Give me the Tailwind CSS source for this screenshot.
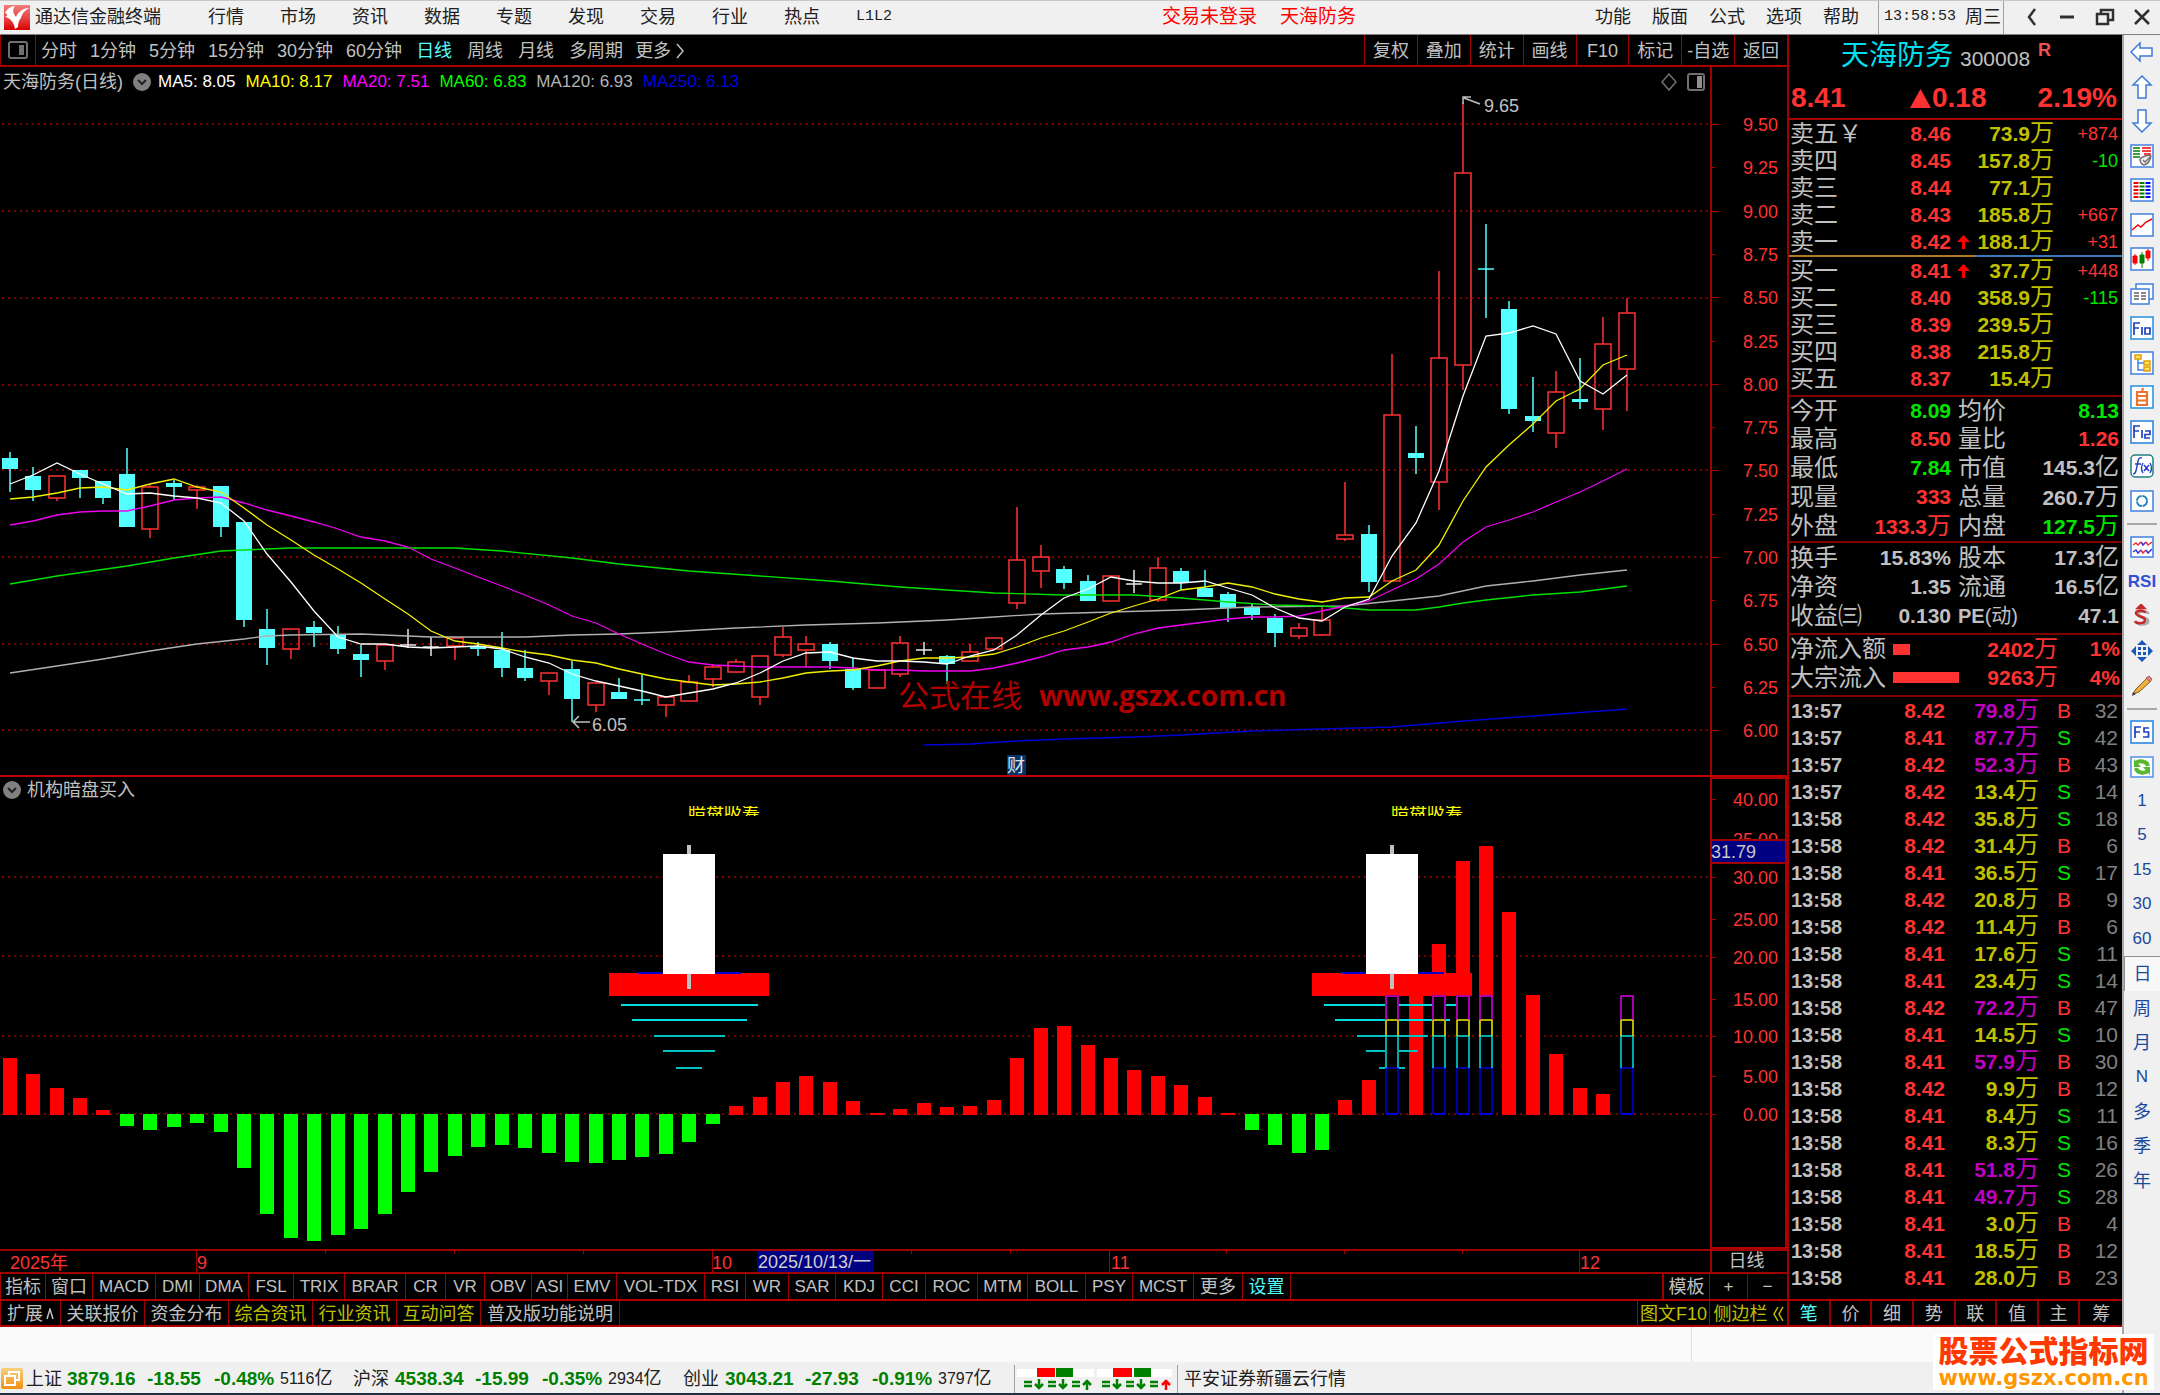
<!DOCTYPE html>
<html lang="zh-CN">
<head>
<meta charset="utf-8">
<title>通达信金融终端</title>
<script src="https://cdn.jsdelivr.net/npm/@tailwindcss/browser@4"></script>
</head>
<body class="flex min-h-screen flex-col overflow-x-hidden bg-black font-['Liberation_Sans','Noto_Sans_CJK_SC',sans-serif] text-[18px] leading-[24px] text-[#c0c0c0]">

<!-- title bar -->
<header class="flex h-[35px] shrink-0 items-center border-y border-t-[#c8c8c8] border-b-[#808080] bg-[#f0f0f0] pb-[3px] pt-[2px] text-[#202020]">
  <svg class="ml-[4px] h-[25px] w-[26px] shrink-0" viewBox="0 0 26 25"><defs><linearGradient id="lg" x1="0" y1="0" x2="0" y2="1"><stop offset="0" stop-color="#f08080"/><stop offset=".55" stop-color="#e84040"/><stop offset="1" stop-color="#d80000"/></linearGradient></defs><rect width="26" height="25" fill="url(#lg)"/><path d="M1 8C3 4 7 1 11 1 8 5 9 8 12 12 14 7 19 3 25 3 20 6 18 9 17 13 15 15 14 18 14 22L11 24C10 18 7 13 1 12 4 11 4 9 1 8Z" fill="#fff"/></svg>
  <span class="ml-[5px] whitespace-nowrap">通达信金融终端</span>
  <nav class="ml-[47px] flex items-center gap-9 whitespace-nowrap">
    <button>行情</button><button>市场</button><button>资讯</button><button>数据</button><button>专题</button><button>发现</button><button>交易</button><button>行业</button><button>热点</button><button class="font-['Liberation_Mono',monospace] text-[15px]">L1L2</button>
  </nav>
  <div class="ml-[270px] flex gap-[23px] whitespace-nowrap text-[19px] text-[#ff0000]"><button>交易未登录</button><span>天海防务</span></div>
  <nav class="ml-auto flex gap-[21px] whitespace-nowrap pr-[19px]">
    <button>功能</button><button>版面</button><button>公式</button><button>选项</button><button>帮助</button>
  </nav>
  <div class="flex h-[33px] w-[126px] shrink-0 items-center gap-[9px] whitespace-nowrap border-x border-[#a0a0a0] pl-[5px]"><span class="font-['Liberation_Mono',monospace] text-[15px]">13:58:53</span><span>周三</span></div>
  <div class="flex w-[156px] shrink-0 items-center justify-between pl-[20px] pr-[10px]">
    <button aria-label="后退"><svg class="h-5 w-4" viewBox="0 0 16 20" fill="none" stroke="#303030" stroke-width="2.5"><path d="M11 2 5 10 11 18"/></svg></button>
    <button aria-label="最小化"><svg class="h-5 w-4" viewBox="0 0 16 20"><path d="M1 10H15" stroke="#303030" stroke-width="3"/></svg></button>
    <button aria-label="还原"><svg class="h-5 w-5" viewBox="0 0 20 20" fill="none" stroke="#303030" stroke-width="2.5"><path d="M2 7H13V17H2ZM6 7V3H18V13H13"/></svg></button>
    <button aria-label="关闭"><svg class="h-5 w-4" viewBox="0 0 16 20" fill="none" stroke="#303030" stroke-width="2.5"><path d="M1 3 15 17M15 3 1 17"/></svg></button>
  </div>
</header>

<div class="flex flex-1">
<div class="flex min-w-0 flex-1 flex-col">
<div class="flex">

<!-- chart column -->
<main class="flex min-w-0 flex-1 flex-col">
  <div class="flex h-8 items-stretch border-b-2 border-[#a80000] whitespace-nowrap">
    <button class="flex w-[36px] items-center justify-center border-x border-[#a00000]" aria-label="侧栏"><svg class="h-[18px] w-[20px]" viewBox="0 0 20 18" fill="none"><rect x="1" y="1" width="18" height="16" rx="2" stroke="#707070" stroke-width="2"/><rect x="11" y="4" width="5" height="10" fill="#707070"/></svg></button>
    <nav class="flex gap-[13px] pl-[5px] pt-[2px]"><button>分时</button><button>1分钟</button><button>5分钟</button><button>15分钟</button><button>30分钟</button><button>60分钟</button></nav>
    <nav class="flex gap-[15px] pl-[14px] pt-[2px]"><button class="text-[#54fcfc]">日线</button><button>周线</button><button>月线</button><button>多周期</button></nav>
    <button class="flex items-center gap-[5px] pl-3 pt-[2px]">更多<svg class="h-4 w-2" viewBox="0 0 8 16" fill="none" stroke="#c0c0c0" stroke-width="1.5"><path d="M1 1 7 8 1 15"/></svg></button>
    <div class="ml-auto grid w-[423px] grid-cols-8 text-center [&>button]:pt-[2px]">
      <button class="border-l border-[#a00000]">复权</button><button class="border-l border-[#a00000]">叠加</button><button class="border-l border-[#a00000]">统计</button><button class="border-l border-[#a00000]">画线</button><button class="border-l border-[#a00000]">F10</button><button class="border-l border-[#a00000]">标记</button><button class="border-l border-[#a00000]">-自选</button><button class="border-l border-[#a00000]">返回</button>
    </div>
  </div>

  <!-- candlestick pane -->
  <section class="flex border-b-2 border-[#c00000]">
    <div class="min-w-0 flex-1">
      <div class="flex h-7 items-center gap-[10px] whitespace-nowrap pl-[3px] pr-[5px] pt-[1px] text-[17px]">
        <span class="text-[18px]">天海防务(日线)</span>
        <svg class="h-[18px] w-[18px]" viewBox="0 0 18 18"><circle cx="9" cy="9" r="9" fill="#808080"/><path d="M5 7 9 11 13 7" fill="none" stroke="#202020" stroke-width="2"/></svg>
        <span class="-ml-[3px] text-white">MA5: 8.05</span><span class="text-[#ffff00]">MA10: 8.17</span><span class="text-[#ff00ff]">MA20: 7.51</span><span class="text-[#00ff00]">MA60: 6.83</span><span class="text-[#b4b4b4]">MA120: 6.93</span><span class="text-[#0000e0]">MA250: 6.13</span>
        <svg class="ml-auto h-[18px] w-[16px]" viewBox="0 0 16 18" fill="none" stroke="#707070" stroke-width="1.5"><path d="M8 1 15 9 8 17 1 9Z"/></svg>
        <svg class="h-[18px] w-[18px]" viewBox="0 0 18 18" fill="none"><rect x="1" y="1" width="16" height="16" rx="2" stroke="#707070" stroke-width="2"/><rect x="10" y="3" width="5" height="12" fill="#909090"/></svg>
      </div>
      <svg id="kline" class="block h-[680px] w-full" viewBox="0 95 1710 680" preserveAspectRatio="none"></svg>
    </div>
    <svg id="kaxis" class="block h-[708px] w-[77px] shrink-0" viewBox="0 67 77 708" shape-rendering="crispEdges"></svg>
  </section>

  <!-- indicator pane -->
  <section class="flex">
    <div class="min-w-0 flex-1">
      <div class="flex h-[23px] items-center gap-[6px] pl-[3px] pt-[2px]">
        <svg class="h-[18px] w-[18px]" viewBox="0 0 18 18"><circle cx="9" cy="9" r="9" fill="#808080"/><path d="M5 7 9 11 13 7" fill="none" stroke="#202020" stroke-width="2"/></svg>
        <span>机构暗盘买入</span>
      </div>
      <svg id="ind" class="block h-[449px] w-full" viewBox="0 800 1710 449" preserveAspectRatio="none" shape-rendering="crispEdges"></svg>
    </div>
    <svg id="iaxis" class="block h-[472px] w-[77px] shrink-0" viewBox="0 777 77 472" shape-rendering="crispEdges"></svg>
  </section>

  <!-- time axis -->
  <div class="flex h-[25px] border-y-2 border-[#a00000]">
    <svg id="taxis" class="block h-[21px] min-w-0 flex-1" viewBox="0 1251 1710 21" preserveAspectRatio="none" shape-rendering="crispEdges"></svg>
    <div class="w-[77px] border-l-2 border-[#a00000] pr-[6px] text-center leading-[21px]">日线</div>
  </div>

  <!-- indicator tabs -->
  <div class="flex h-[25px] justify-between whitespace-nowrap text-[17px] leading-[22px]">
    <nav class="grid grid-cols-[45px_47px_63px_44px_49px_45px_51px_61px_40px_39px_47px_36px_49px_88px_41px_43px_47px_47px_43px_52px_50px_58px_47px_61px_49px_47px] divide-x divide-[#a00000] border-x border-[#a00000] text-center">
      <button class="text-[18px]">指标</button><button class="text-[18px]">窗口</button><button>MACD</button><button>DMI</button><button>DMA</button><button>FSL</button><button>TRIX</button><button>BRAR</button><button>CR</button><button>VR</button><button>OBV</button><button>ASI</button><button>EMV</button><button>VOL-TDX</button><button>RSI</button><button>WR</button><button>SAR</button><button>KDJ</button><button>CCI</button><button>ROC</button><button>MTM</button><button>BOLL</button><button>PSY</button><button>MCST</button><button class="text-[18px]">更多</button><button class="text-[18px] text-[#54fcfc]">设置</button>
    </nav>
    <div class="grid grid-cols-[46px_38px_39px] divide-x divide-[#a00000] border-l-2 border-[#a00000] text-center"><button class="text-[18px]">模板</button><button>+</button><button>−</button></div>
  </div>
  <div class="flex h-7 justify-between whitespace-nowrap border-y-2 border-[#b00000] leading-[24px]">
    <nav class="grid grid-cols-[60px_84px_84px_84px_84px_84px_138px] divide-x divide-[#a00000] border-x border-[#a00000] text-center [&>button]:pt-[1px]">
      <button class="flex items-center justify-center gap-[3px]">扩展<svg class="h-3 w-2" viewBox="0 0 8 12" fill="none" stroke="#c0c0c0" stroke-width="1.5"><path d="M1 11 4 1 7 11"/></svg></button><button>关联报价</button><button>资金分布</button><button class="text-[#c0c000]">综合资讯</button><button class="text-[#c0c000]">行业资讯</button><button class="text-[#c0c000]">互动问答</button><button>普及版功能说明</button>
    </nav>
    <div class="grid grid-cols-[72px_77px] divide-x divide-[#a00000] border-l border-[#a00000] text-center text-[#c0c000] [&>button]:pt-[1px]"><button>图文F10</button><button class="flex items-center justify-center gap-[5px]">侧边栏<svg class="h-4 w-[11px]" viewBox="0 0 11 16" fill="none" stroke="#c0c000" stroke-width="1.5"><path d="M5 1 1 8 5 15M10 1 6 8 10 15"/></svg></button></div>
  </div>
</main>

<!-- quote panel -->
<aside class="flex w-[335px] shrink-0 flex-col border-l-2 border-[#a00000]">
  <div class="h-[85px] border-b-2 border-[#a80000]">
    <div class="flex h-[42px] items-center pl-[52px]"><h1 class="text-[28px] leading-[40px] text-[#00e0f0]">天海防务</h1><span class="pl-[7px] pt-[5px] text-[21px]">300008</span><b class="pb-[12px] pl-[8px] text-[18px] leading-[20px] text-[#f05050]">R</b></div>
    <div class="grid grid-cols-[119px_1fr_auto] pl-[2px] pr-[5px] pt-[1px] text-[28px] font-bold leading-[40px] text-[#ff3232]"><span>8.41</span><span class="flex items-center gap-[1px]"><svg class="h-[19px] w-[21px]" viewBox="0 0 21 19"><path d="M10.500 0 21 19H0Z" fill="#ff3232"/></svg>0.18</span><span>2.19%</span></div>
  </div>
  <table class="w-full table-fixed text-right leading-[24px]" aria-label="卖盘"><colgroup><col class="w-[100px]"><col class="w-[62px]"><col class="w-[103px]"><col></colgroup><tbody id="asks"></tbody></table>
  <div class="flex h-[2px]"><i class="w-[186px] bg-[#b07828]"></i><i class="flex-1 bg-[#3878b8]"></i></div>
  <table class="w-full table-fixed text-right leading-[24px]" aria-label="买盘"><colgroup><col class="w-[100px]"><col class="w-[62px]"><col class="w-[103px]"><col></colgroup><tbody id="bids"></tbody></table>
  <div class="mt-[3px] border-t-2 border-[#800000]">
    <table class="h-[144px] w-full table-fixed leading-[24px]"><colgroup><col class="w-[63px]"><col class="w-[99px]"><col class="w-[78px]"><col></colgroup><tbody id="info1"></tbody></table>
  </div>
  <div class="border-t-2 border-[#800000] pb-[3px]">
    <table class="h-[87px] w-full table-fixed leading-[24px]"><colgroup><col class="w-[80px]"><col class="w-[82px]"><col class="w-[78px]"><col></colgroup><tbody id="info2"></tbody></table>
  </div>
  <div class="border-t-2 border-[#800000] pb-[3px]">
    <table class="h-[57px] w-full table-fixed leading-[24px]"><colgroup><col class="w-[104px]"><col class="w-[66px]"><col class="w-[99px]"><col></colgroup><tbody id="flow"></tbody></table>
  </div>
  <div class="border-t-2 border-[#800000]">
    <table class="w-full table-fixed text-right leading-[24px]" aria-label="成交明细"><colgroup><col class="w-[80px]"><col class="w-[76px]"><col class="w-[94px]"><col class="w-[43px]"><col></colgroup><tbody id="ticks"></tbody></table>
  </div>
  <nav class="mt-auto grid h-7 grid-cols-8 divide-x-2 divide-[#900000] border-y-2 border-[#b00000] text-center [&>button]:pt-[1px]"><button class="text-[#54fcfc]">笔</button><button>价</button><button>细</button><button>势</button><button>联</button><button>值</button><button>主</button><button>筹</button></nav>
</aside>
</div>

<!-- message strip and status bar -->
<div class="flex h-[35px] bg-[#fafafa]"><div class="flex-1 border-r border-[#e0e0e0]"></div><div class="w-[430px]"></div></div>
<footer class="flex h-[31px] items-center whitespace-nowrap bg-[#f0f0f0] pl-[1px] pt-[2px] text-[#202020]">
  <svg class="h-[21px] w-[22px]" viewBox="0 0 22 21"><defs><linearGradient id="og" x1="0" y1="0" x2="0" y2="1"><stop offset="0" stop-color="#f8d080"/><stop offset="1" stop-color="#f09010"/></linearGradient></defs><rect width="22" height="21" rx="2" fill="url(#og)"/><path d="M8 8V4H18V12H14M4 8H14V17H4Z" fill="none" stroke="#fff" stroke-width="2"/></svg>
  <div class="flex w-[327px] items-center pl-[3px]"><span class="w-[41px]">上证</span><b class="w-[80px] text-[19px] text-[#008000]">3879.16</b><b class="w-[67px] text-[19px] text-[#008000]">-18.55</b><b class="w-[66px] text-[19px] text-[#008000]">-0.48%</b><span class="text-[16px]">5116<span class="text-[18px]">亿</span></span></div>
  <div class="flex w-[330px] items-center pl-[3px]"><span class="w-[42px]">沪深</span><b class="w-[80px] text-[19px] text-[#008000]">4538.34</b><b class="w-[67px] text-[19px] text-[#008000]">-15.99</b><b class="w-[66px] text-[19px] text-[#008000]">-0.35%</b><span class="text-[16px]">2934<span class="text-[18px]">亿</span></span></div>
  <div class="flex w-[334px] items-center pl-[3px]"><span class="w-[42px]">创业</span><b class="w-[80px] text-[19px] text-[#008000]">3043.21</b><b class="w-[67px] text-[19px] text-[#008000]">-27.93</b><b class="w-[66px] text-[19px] text-[#008000]">-0.91%</b><span class="text-[16px]">3797<span class="text-[18px]">亿</span></span></div>
  <div class="flex h-[28px] w-[164px] items-center gap-[3px] border-x border-[#a0a0a0] pl-[2px]">
    <svg class="h-[24px] w-[77px]" viewBox="0 0 77 24"><path d="M0 2H77V10H0Z" fill="#fff"/><path d="M20 1H38V10H20Z" fill="#f00"/><path d="M39 1H56V10H39Z" fill="#008000"/><g fill="none" stroke="#008000" stroke-width="2.5"><path d="M7 15H15M7 19H15M31 15H39M31 19H39M55 15H63M55 19H63M22 12V22M18 17 22 21 26 17M46 12V22M42 17 46 21 50 17M70 23V13M66 18 70 14 74 18"/></g></svg>
    <svg class="h-[24px] w-[77px]" viewBox="0 0 77 24"><path d="M0 2H75V10H0Z" fill="#fff"/><path d="M16 1H35V10H16Z" fill="#f00"/><path d="M37 1H54V10H37Z" fill="#008000"/><g fill="none" stroke="#008000" stroke-width="2.5"><path d="M5 15H13M5 19H13M29 15H37M29 19H37M53 15H61M53 19H61M20 12V22M16 17 20 21 24 17M44 12V22M40 17 44 21 48 17"/><path stroke="#f00" d="M69 23V13M65 18 69 14 73 18"/></g></svg>
  </div>
  <span class="pl-[6px]">平安证券新疆云行情</span>
</footer>
</div>

<!-- tool strip -->
<aside class="flex w-[38px] shrink-0 flex-col border-l-2 border-[#a8a8a8] bg-[#f0f0f0] text-[18px] leading-[24px] text-[#1c489c]">
  <nav class="flex h-[483px] flex-col [&>button]:flex [&>button]:flex-1 [&>button]:items-center [&>button]:justify-center [&_svg]:h-6 [&_svg]:w-6">
    <button aria-label="返回"><svg viewBox="0 0 24 24" fill="#fff" stroke="#4078d8" stroke-width="1.500"><path d="M1 12 10 3V8H22V16H10V21Z"/></svg></button>
    <button aria-label="上"><svg viewBox="0 0 24 24" fill="#fff" stroke="#4078d8" stroke-width="1.500"><path d="M12 1 21 10H16V23H8V10H3Z"/></svg></button>
    <button aria-label="下"><svg viewBox="0 0 24 24" fill="#fff" stroke="#4078d8" stroke-width="1.500"><path d="M12 23 21 14H16V1H8V14H3Z"/></svg></button>
    <button aria-label="报价"><svg viewBox="0 0 24 24"><path d="M1 1H23V23H1Z" fill="#fff" stroke="#4080e0" stroke-width="1.500"/><path d="M3 4H10M3 7H10M3 10H10M3 13H10" stroke="#008000" stroke-width="1.500"/><path d="M12 4H21M12 7H21M14 10H21" stroke="#f00000" stroke-width="1.500"/><path d="M10 15C12 13 18 10 21 12 20 17 18 20 14 21 11 20 10 18 10 15M13 16 15 18 20 13" fill="#eee" stroke="#707070" stroke-width="1.500"/></svg></button>
    <button aria-label="行情表"><svg viewBox="0 0 24 24"><path d="M1 1H23V23H1Z" fill="#fff" stroke="#4080e0" stroke-width="1.500"/><g stroke-width="5" stroke-dasharray="2 1.500" fill="none"><path d="M6 4V20" stroke="#f00000"/><path d="M12 4V20" stroke="#008000"/><path d="M18 4V20" stroke="#0000f0"/></g></svg></button>
    <button aria-label="分时图"><svg viewBox="0 0 24 24"><path d="M1 1H23V23H1Z" fill="#fff" stroke="#4080e0" stroke-width="1.500"/><path d="M2 17 8 12 11 14 16 9 22 6" fill="none" stroke="#f00000" stroke-width="1.500"/></svg></button>
    <button aria-label="K线图"><svg viewBox="0 0 24 24"><path d="M1 1H23V23H1Z" fill="#fff" stroke="#4080e0" stroke-width="1.500"/><path d="M3 9H7V16H3ZM5 7V18M16 4H20V11H16ZM18 2V14" fill="#f00" stroke="#f00"/><path d="M10 8H14V16H10ZM12 5V21" fill="#008000" stroke="#008000"/></svg></button>
    <button aria-label="资料"><svg viewBox="0 0 24 24"><path d="M6 2H23V17H6Z" fill="#fff" stroke="#4080e0" stroke-width="1.500"/><path d="M1 7H19V22H1Z" fill="#fff" stroke="#4080e0" stroke-width="1.500"/><path d="M4 11H9M11 11H16M4 14H9M11 14H16M4 17H9M11 17H16" stroke="#606060" stroke-width="1.500"/></svg></button>
    <button aria-label="F10"><svg viewBox="0 0 24 24"><path d="M1 1H23V23H1Z" fill="#fff" stroke="#2090e0" stroke-width="1.500"/><path d="M4 19V7H10M4 12H9M12 11V19M15 12H20V18H15Z" fill="none" stroke="#2040c0" stroke-width="1.700"/></svg></button>
    <button aria-label="结构"><svg viewBox="0 0 24 24"><path d="M1 1H23V23H1Z" fill="#fff" stroke="#4080e0" stroke-width="1.500"/><path d="M8 7V19H15M8 12H15" fill="none" stroke="#4080e0" stroke-width="1.500"/><path d="M5 4H11V8H5ZM14 10H20V14H14ZM14 16H20V20H14Z" fill="#ffe060" stroke="#e0a000" stroke-width="1.500"/></svg></button>
    <button aria-label="自选"><svg viewBox="0 0 24 24"><path d="M1 1H23V23H1Z" fill="#fff" stroke="#2090e0" stroke-width="1.500"/><path d="M7 7H17V20H7ZM7 11H17M7 15.500H17M12 7 13 3" fill="none" stroke="#f07030" stroke-width="2.200"/></svg></button>
    <button aria-label="F12"><svg viewBox="0 0 24 24"><path d="M1 1H23V23H1Z" fill="#fff" stroke="#2080e0" stroke-width="1.500"/><path d="M4 18V6H10M4 11H9M12 10V18M15 11H20V14.500H15V18H20" fill="none" stroke="#2040c0" stroke-width="1.700"/></svg></button>
    <button aria-label="公式"><svg viewBox="0 0 24 24"><rect x="1" y="1" width="22" height="22" rx="4" fill="#fff" stroke="#208080" stroke-width="1.500"/><path d="M12 4C8 2 8 8 7 12 6 17 6 20 3 20M5 10H11M13 9Q10 14 13 19M20 9Q23 14 20 19M14 11 19 17M19 11 14 17" fill="none" stroke="#2040c0" stroke-width="1.400"/></svg></button>
    <button aria-label="圆"><svg viewBox="0 0 24 24"><path d="M1 2H23V22H1Z" fill="#fff" stroke="#4080e0" stroke-width="1.500"/><circle cx="12" cy="12" r="5" fill="none" stroke="#2080c0" stroke-width="2" stroke-dasharray="7 .8"/></svg></button>
  </nav>
  <hr class="mx-[3px] my-[5px] border-t-2 border-[#a8a8a8]">
  <nav class="flex h-[173px] flex-col [&>button]:flex [&>button]:flex-1 [&>button]:items-center [&>button]:justify-center [&_svg]:h-6 [&_svg]:w-6">
    <button aria-label="指标线"><svg viewBox="0 0 24 24"><path d="M1 2H23V22H1Z" fill="#fff" stroke="#4080e0" stroke-width="1.500"/><g fill="none" stroke-width="1.500"><path d="M3 10 6 8 8 10 11 7" stroke="#f03030"/><path d="M11 7 13 10 16 7" stroke="#4030e0"/><path d="M16 7 18 10 22 7" stroke="#f03030"/><path d="M3 17 6 15 8 18 11 15" stroke="#4030e0"/><path d="M11 15 13 18 16 15" stroke="#f03030"/><path d="M16 15 18 18 22 14" stroke="#4030e0"/></g></svg></button>
    <button class="text-[17px] font-bold text-[#3050d8]">RSI</button>
    <button aria-label="交易"><svg viewBox="0 0 24 24"><path d="M18 10C18 7 8 6 8 10 8 14 18 13 18 17 18 21 8 21 7 18" fill="none" stroke="#a8a8a8" stroke-width="3"/><path d="M15 9C15 6 6 6 6 9 6 13 15 12 15 16 15 20 6 20 5 17M11 1 14 4H8Z" fill="none" stroke="#c82828" stroke-width="2.500"/></svg></button>
    <button aria-label="移动"><svg viewBox="0 0 24 24" fill="#1858b8"><path d="M12 1 17 6H7ZM12 23 17 18H7ZM1 12 6 7V17ZM23 12 18 7V17ZM8 8H11V11H8ZM13 8H16V11H13ZM8 13H11V16H8ZM13 13H16V16H13Z"/></svg></button>
    <button aria-label="画笔"><svg viewBox="0 0 24 24"><path d="M3 20 6 15 17 4 21 7 9 18Z" fill="#f0b040" stroke="#806020"/><path d="M16 4 19 2 22 5 20 8Z" fill="#e88080" stroke="#a06060"/><path d="M2 22 3 18 6 20Z" fill="#303030"/></svg></button>
  </nav>
  <hr class="mx-[3px] my-[5px] border-t-2 border-[#a8a8a8]">
  <nav class="flex h-[483px] flex-col [&>button]:flex [&>button]:flex-1 [&>button]:items-center [&>button]:justify-center [&_svg]:h-6 [&_svg]:w-6">
    <button aria-label="F5"><svg viewBox="0 0 24 24"><path d="M1 1H23V23H1Z" fill="#fff" stroke="#2080e0" stroke-width="1.500"/><path d="M5 18V7H11M5 12H10M19 8H14V12H18.500V17H13" fill="none" stroke="#2040c0" stroke-width="1.700"/></svg></button>
    <button aria-label="刷新"><svg viewBox="0 0 24 24"><path d="M1 2H23V22H1Z" fill="#fff" stroke="#5090f0" stroke-width="1.500"/><path d="M18 11C17 6 9 5 6 8M6 13C7 18 14 19 18 16" fill="none" stroke="#58b830" stroke-width="4"/><path d="M4 4V12H11ZM20 20V12H13Z" fill="#58b830"/></svg></button>
    <button class="text-[17px]">1</button><button class="text-[17px]">5</button><button class="text-[17px]">15</button><button class="text-[17px]">30</button><button class="text-[17px]">60</button>
    <button class="border-l border-t border-[#909090] bg-[#f8f8f8]">日</button><button>周</button><button>月</button><button class="text-[17px]">N</button><button>多</button><button>季</button><button>年</button>
  </nav>
</aside>
</div>
<div class="h-[2px] bg-[#203040]"></div>

<!-- site badge over the status area -->
<div class="absolute right-[6px] top-[1334px] flex h-[56px] w-[221px] flex-col items-center bg-white whitespace-nowrap pt-[2px]">
  <b class="text-[30px] font-black leading-[32px] text-[#ff3800]">股票公式指标网</b>
  <b class="font-['DejaVu_Sans',sans-serif] text-[21px] leading-[20px] text-[#ff9800]">www.gszx.com.cn</b>
</div>

<script>
const $ = id => document.getElementById(id);
const X = i => Math.round(9.7 + 23.433 * i);
const R = '#ff3232', C = '#54ffff', G = '#00e600', W = '#e8e8e8', Y = '#c0c000';

/* [kind, high, body top, body bottom, low]; D / E are white and cyan dojis */
const K = [['C',452,458,469,492],['C',467,476,490,501],['R',476,476,498,501],['C',470,470,478,498],['C',481,481,498,504],['C',448,474,527,527],['R',485,487,529,538],['C',480,483,487,500],['R',485,487,490,509],['C',486,486,527,537],
['C',522,522,620,627],['C',609,629,648,665],['R',629,629,649,659],['C',621,627,633,647],['C',626,634,649,654],['C',645,654,660,677],['R',645,645,661,670],['D',629,645,645,648],['D',637,647,647,656],['R',638,638,646,660],
['C',642,646,649,656],['C',632,650,668,677],['C',650,668,678,681],['R',673,673,681,695],['C',661,669,699,722],['R',683,683,705,712],['C',678,692,699,699],['E',675,700,700,705],['R',696,697,705,717],['R',675,682,701,701],
['R',664,667,679,687],['R',659,662,672,673],['R',656,656,697,705],['R',627,637,655,657],['R',636,644,650,667],['C',642,644,661,669],['C',658,669,688,690],['R',670,670,688,688],['R',636,643,674,677],['D',642,650,650,655],
['C',655,656,664,684],['R',644,652,661,661],['R',638,638,649,649],['R',507,560,603,609],['R',545,557,571,588],['C',566,569,583,589],['C',575,581,601,601],['R',576,576,601,601],['D',570,584,584,593],['R',557,568,600,602],
['C',568,571,583,590],['C',570,588,597,597],['C',592,594,608,622],['C',603,607,615,620],['C',614,618,633,647],['R',623,628,636,639],['R',607,620,635,636],['R',482,535,539,541],['C',525,534,582,592],['R',354,415,581,581],
['C',426,453,458,474],['R',271,358,482,510],['R',102,173,365,390],['E',224,269,269,318],['C',301,309,409,414],['C',377,416,421,432],['R',371,392,433,448],['C',358,399,402,409],['R',317,344,409,430],['R',298,313,369,411]];

const seq = a => a.map((y, i) => [i, y]);
const ma5 = seq([484,475,463,474,484,494,493,496,498,503,521,554,582,611,637,644,644,647,648,647,646,649,657,663,674,681,686,691,697,693,689,683,673,661,653,652,658,661,661,662,664,656,650,635,615,598,589,577,581,583,583,581,588,595,608,618,621,607,599,556,523,471,396,336,333,326,334,381,394,375]);
const ma10 = seq([499,497,493,488,487,490,484,479,487,492,508,525,540,555,569,583,599,614,631,641,644,648,652,655,660,663,669,674,679,682,685,684,682,678,673,671,670,666,661,658,658,657,654,647,638,631,622,613,606,599,590,587,583,587,594,599,602,598,597,581,570,545,501,467,445,424,401,389,365,355]);
const ma20 = seq([525,521,515,512,511,511,506,500,498,497,503,510,516,522,529,537,541,547,559,568,577,586,595,605,616,623,634,644,654,662,665,666,667,667,667,667,668,670,670,671,671,671,668,663,657,650,647,642,634,628,625,622,619,617,617,616,611,606,601,590,579,564,542,527,520,512,502,492,481,469]);
const ma60 = [[0,584],[2,576],[5,566],[7,558],[9,551],[11,549],[12,548],[19,548],[21,551],[24,558],[26,564],[29,571],[32,576],[35,581],[38,587],[42,593],[45,595],[48,595],[50,598],[52,602],[54,605],[56,606],[58,610],[60,610],[61,607],[62,603],[63,600],[65,595],[67,592],[69,586]];
const ma120 = [[0,673],[2,666],[4,659],[6,651],[8,644],[10,639],[11,636],[12,635],[15,634],[18,637],[22,637],[24,635],[26,634],[28,632],[31,628],[34,625],[37,623],[40,620],[42,617],[44,614],[47,612],[50,610],[53,607],[57,606],[59,601],[61,596],[63,586],[65,581],[67,575],[69,570]];
const ma250 = [[39,745],[41,744],[43,741],[45,739],[48,737],[50,735],[53,731],[56,729],[59,727],[62,721],[65,716],[69,709]];

const grid = (y, w) => `<path shape-rendering="auto" d="M2 ${y}H${w}" stroke="#a00000" stroke-width="1.500" stroke-dasharray="2 4"/>`;
const line = (p, c) => `<polyline fill="none" stroke="${c}" stroke-width="1.300" points="${p.map(([i, y]) => X(i) + ',' + y).join(' ')}"/>`;

let s = [124,211,298,385,470,557,644,730].map(y => grid(y, 1709)).join('');
K.forEach(([t, h, a, b, l], i) => {
  const x = X(i), c = t === 'R' ? R : t === 'D' ? W : C;
  if (t === 'D' || t === 'E') s += `<path d="M${x} ${h}V${l}M${x-8} ${a}H${x+8}" stroke="${c}" stroke-width="1.500"/>`;
  else if (t === 'C') s += `<path d="M${x} ${h}V${l}" stroke="${c}" stroke-width="1.500"/><rect x="${x-8}" y="${a}" width="16" height="${b-a}" fill="${c}"/>`;
  else s += `<path d="M${x} ${h}V${a}M${x} ${b}V${l}" stroke="${c}" stroke-width="1.500"/><rect x="${x-8}" y="${a}" width="16" height="${b-a}" fill="none" stroke="${c}" stroke-width="1.500"/>`;
});
s += line(ma250, '#0000d8') + line(ma120, '#b0b0b0') + line(ma60, '#00e000') + line(ma20, '#f000f0') + line(ma10, '#f0f000') + line(ma5, '#ffffff');
s += `<path d="M1480 104 1464 98M1471 97H1463V104" fill="none" stroke="#c0c0c0" stroke-width="1.500"/><text x="1484" y="112" font-size="18" fill="#c0c0c0">9.65</text>
<path d="M590 722H573M579 716 573 722 579 728" fill="none" stroke="#c0c0c0" stroke-width="1.500"/><text x="592" y="731" font-size="18" fill="#c0c0c0">6.05</text>
<text x="898" y="707" font-size="31" fill="#b00000">公式在线</text><text x="1039" y="706" font-size="28" font-weight="700" fill="#b00000" font-family="Open Sans, sans-serif">www.gszx.com.cn</text>
<rect x="1007" y="755" width="19" height="20" fill="#003468"/><text x="1007" y="772" font-size="18" fill="#e0e0e0">财</text>`;
$('kline').innerHTML = s;

/* price scale */
s = '<path d="M1 67V775" stroke="#a00000" stroke-width="2"/>';
['9.50','9.25','9.00','8.75','8.50','8.25','8.00','7.75','7.50','7.25','7.00','6.75','6.50','6.25','6.00'].forEach((v, n) => {
  const y = Math.round(124 + n * 43.3);
  s += `<path d="M2 ${y}H${n % 2 ? 5 : 9}" stroke="#a00000" stroke-width="1"/><text x="68" y="${y+7}" text-anchor="end" font-size="18" fill="${R}">${v}</text>`;
});
$('kaxis').innerHTML = s;

/* indicator: histogram ends, zero line at 1114 */
const H = [1058,1074,1088,1098,1110,1126,1130,1127,1123,1132,1168,1214,1238,1241,1235,1229,1214,1192,1172,1156,1147,1145,1148,1153,1162,1163,1160,1157,1154,1142,1124,1106,1097,1082,1076,1082,1101,1113,1109,1103,1107,1106,1100,1058,1028,1026,1045,1058,1070,1076,1085,1097,1113,1130,1145,1153,1150,1100,1080,0,990,944,861,846,912,995,1054,1088,1094,0];
s = [877,956,1036,1114].map(y => grid(y, 1709)).join('');
H.forEach((y, i) => {
  if (!y) return;
  const up = y < 1114;
  s += `<rect x="${X(i)-7}" y="${up ? y : 1114}" width="14" height="${up ? 1115 - y : y - 1114}" fill="${up ? '#ff0000' : '#00ff00'}"/>`;
});
[0, 703].forEach(d => {
  const h = (y, a, b, c) => `<path d="M${a+d} ${y}H${b+d}" stroke="${c}" stroke-width="2"/>`;
  s += `<rect x="${609+d}" y="973" width="160" height="23" fill="#ff0000"/>` + h(973,638,741,'#0000d0')
    + `<rect x="${663+d}" y="854" width="52" height="120" fill="#fff"/><path d="M${689+d} 845V854M${689+d} 974V989" stroke="#c0c0c0" stroke-width="4"/>`
    + h(1005,621,758,'#00e0e0') + h(1020,632,747,'#00e0e0') + h(1036,654,725,'#00c0c0') + h(1051,663,715,'#00c0c0') + h(1068,676,702,'#00c0c0')
    + `<svg x="${688+d}" y="806" width="76" height="10"><text x="0" y="12" font-size="18" fill="#ffff00">暗盘吸筹</text></svg>`;
});
[59,61,62,63,69].forEach(i => {
  const x = X(i) - 6;
  s += `<rect x="${x-1}" y="995" width="14" height="120" fill="#000"/>`;
  [[1068,1114,'#0000e0'],[1036,1068,'#00e0e0'],[1020,1036,'#f0f000'],[996,1020,'#e000e0']].forEach(([a, b, c]) =>
    s += `<path shape-rendering="auto" d="M${x} ${b}V${a}H${x+12}V${b}" fill="none" stroke="${c}" stroke-width="1.500"/>`);
  s += `<path d="M${x} 1114H${x+12}" stroke="#0000e0" stroke-width="2"/>`;
});
$('ind').innerHTML = s;

s = '<rect x="1" y="778" width="75" height="470" fill="none" stroke="#b00000" stroke-width="2"/>';
[['40.00',799],['30.00',877],['25.00',919],['20.00',957],['15.00',999],['10.00',1036],['5.00',1076],['0.00',1114]].forEach(([v, y]) =>
  s += `<path d="M2 ${y}H6" stroke="#a00000" stroke-width="1"/><text x="68" y="${y+7}" text-anchor="end" font-size="18" fill="${R}">${v}</text>`);
s += `<svg x="2" y="825" width="74" height="14"><text x="66" y="21" text-anchor="end" font-size="18" fill="${R}">35.00</text></svg>`;
s += `<rect x="1" y="840" width="75" height="23" fill="#000080" stroke="#a00000" stroke-width="2"/><text x="1" y="858" font-size="18" fill="#c8c8c8">31.79</text>`;
$('iaxis').innerHTML = s;

/* dates */
s = [[10,'2025年'],[197,'9'],[712,'10'],[1111,'11'],[1580,'12']].map(([x, t]) => `<text x="${x}" y="1269" font-size="18" fill="${R}">${t}</text>`).join('');
s += '<path d="M196 1251V1272M712 1251V1272M1109 1251V1272M1579 1251V1272M325 1251V1254M454 1251V1254M583 1251V1254M911 1251V1254M1010 1251V1254M1226 1251V1254M1344 1251V1254M1462 1251V1254" stroke="#a00000" stroke-width="1"/>';
s += '<rect x="757" y="1251" width="117" height="21" fill="#000080"/><text x="758" y="1268" font-size="18" fill="#d0d0d0">2025/10/13/一</text>';
$('taxis').innerHTML = s;

/* a number in bold with its unit in the lighter, larger face */
const num = v => v.replace(/[万亿]/, m => `<span class="text-[24px] font-normal leading-none">${m}</span>`);
const book = rows => rows.map(([n, p, up, v, d]) => `<tr class="h-[27px]"><th class="pl-[1px] text-left text-[24px] font-normal">${n}</th><td class="text-[21px] font-bold text-[#ff3232]">${p}</td><td class="text-[#c0c000]"><div class="flex items-center justify-between pl-[6px]">${up ? '<svg class="h-[14px] w-[13px]" viewBox="0 0 13 14" fill="#ff0000"><path d="M6.500 0 13 7H8V14H5V7H0Z"/></svg>' : '<i></i>'}<b class="text-[21px]">${num(v)}</b></div></td><td class="pr-[4px] text-[18px] ${d[0] === '-' ? 'text-[#00e600]' : 'text-[#ff3232]'}">${d}</td></tr>`).join('');
$('asks').innerHTML = book([['卖五￥','8.46',0,'73.9万','+874'],['卖四','8.45',0,'157.8万','-10'],['卖三','8.44',0,'77.1万',''],['卖二','8.43',0,'185.8万','+667'],['卖一','8.42',1,'188.1万','+31']]);
$('bids').innerHTML = book([['买一','8.41',1,'37.7万','+448'],['买二','8.40',0,'358.9万','-115'],['买三','8.39',0,'239.5万',''],['买四','8.38',0,'215.8万',''],['买五','8.37',0,'15.4万','']]);

const tone = { r: 'text-[#ff3232]', g: 'text-[#00e600]', w: 'text-[#c0c0c0]', y: 'text-[#c0c000]', m: 'text-[#c000c0]' };
const pair = rows => rows.map(([a, av, ac, b, bv, bc]) => `<tr class="whitespace-nowrap"><th class="pl-[1px] text-left text-[24px] font-normal">${a}</th><td class="text-right text-[21px] font-bold ${tone[ac]}">${num(av)}</td><th class="pl-[7px] text-left text-[24px] font-normal">${b}</th><td class="pr-[3px] text-right text-[21px] font-bold ${tone[bc]}">${num(bv)}</td></tr>`).join('');
$('info1').innerHTML = pair([['今开','8.09','g','均价','8.13','g'],['最高','8.50','r','量比','1.26','r'],['最低','7.84','g','市值','145.3亿','w'],['现量','333','r','总量','260.7万','w'],['外盘','133.3万','r','内盘','127.5万','g']]);
$('info2').innerHTML = pair([['换手','15.83%','w','股本','17.3亿','w'],['净资','1.35','w','流通','16.5亿','w'],['收益㈢','0.130','w','<span class="text-[20px]"><b>PE</b>(动)</span>','47.1','w']]);
$('flow').innerHTML = [['净流入额',17,'2402万','1%'],['大宗流入',66,'9263万','4%']].map(([n, w, v, p]) => `<tr class="whitespace-nowrap text-[21px] font-bold text-[#ff3232]"><th class="pl-[1px] text-left text-[24px] font-normal text-[#c0c0c0]">${n}</th><td><div class="h-[11px] bg-[#ff3232]" style="width:${w}px"></div></td><td class="text-right">${num(v)}</td><td class="pr-[2px] text-right">${p}</td></tr>`).join('');

$('ticks').innerHTML = ['7 2 79.8 B 32','7 1 87.7 S 42','7 2 52.3 B 43','7 2 13.4 S 14','8 2 35.8 S 18','8 2 31.4 B 6','8 1 36.5 S 17','8 2 20.8 B 9','8 2 11.4 B 6','8 1 17.6 S 11','8 1 23.4 S 14','8 2 72.2 B 47','8 1 14.5 S 10','8 1 57.9 B 30','8 2 9.9 B 12','8 1 8.4 S 11','8 1 8.3 S 16','8 1 51.8 S 26','8 1 49.7 S 28','8 1 3.0 B 4','8 1 18.5 B 12','8 1 28.0 B 23'].map(r => {
  const [t, p, v, k, n] = r.split(' ');
  return `<tr class="h-[27px] text-[21px]"><td class="pl-[2px] text-left text-[20px] font-bold">13:5${t}</td><td class="font-bold text-[#ff3232]">8.4${p}</td><td class="font-bold ${+v > 40 ? tone.m : tone.y}">${num(v + '万')}</td><td class="pr-[11px] ${k === 'B' ? tone.r : tone.g}">${k}</td><td class="pr-[4px] text-[#808080]">${n}</td></tr>`;
}).join('');
</script>
</body>
</html>
